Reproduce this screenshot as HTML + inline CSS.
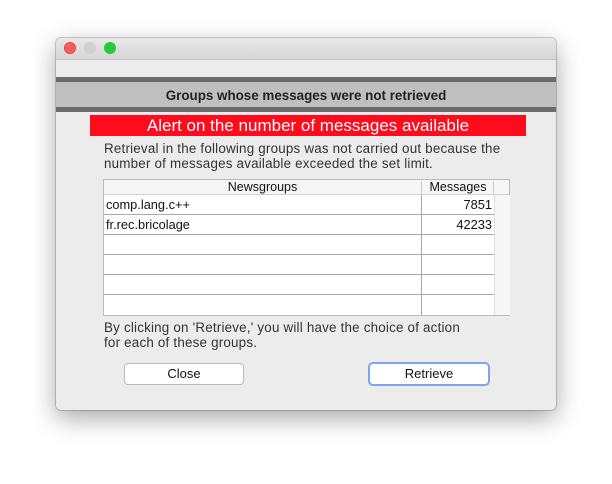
<!DOCTYPE html>
<html><head><style>
body{margin:0;width:612px;height:484px;background:#fff;font-family:"Liberation Sans",sans-serif;position:relative;overflow:hidden}
.win{position:absolute;left:56px;top:38px;width:500px;height:372px;background:#ececec;border-radius:5px;box-shadow:0 8px 25px rgba(0,0,0,.35),0 0 0 1px rgba(0,0,0,.18)}
.tb{position:absolute;left:0;top:0;width:500px;height:21px;background:linear-gradient(#e8e8e8,#d6d6d6);border-bottom:1px solid #c4c4c4;border-radius:5px 5px 0 0}
.d{position:absolute;top:4px;width:12px;height:12px;border-radius:50%;box-sizing:border-box}
.a{position:absolute}
.t{position:absolute;font-size:13.4px;color:#333;white-space:nowrap;letter-spacing:.2px}
.btn{position:absolute;height:20px;background:#fff;border:1px solid #b9b9b9;border-radius:4px;font-size:13px;text-align:center;line-height:20px;color:#111}
</style></head><body>
<div class="win">
<div class="tb">
<div class="d" style="left:8px;background:#fe5f57;border:1px solid #e0443e"></div>
<div class="d" style="left:28px;background:#d0d0d0"></div>
<div class="d" style="left:48px;background:#28c840"></div>
</div>
<div class="a" style="left:0;top:39px;width:500px;height:5px;background:#6b6b6b"></div>
<div class="a" style="left:0;top:44px;width:500px;height:25px;background:#bfbfbf;text-align:center;font-weight:bold;font-size:13.4px;line-height:27px;color:#222">Groups whose messages were not retrieved</div>
<div class="a" style="left:0;top:69px;width:500px;height:5px;background:#6b6b6b"></div>
<div class="a" style="left:34px;top:77px;width:436px;height:21px;background:#fe0b1d;color:#fff;text-align:center;font-size:17px;line-height:21px">Alert on the number of messages available</div>
<div class="t" style="left:48px;top:103px">Retrieval in the following groups was not carried out because the</div>
<div class="t" style="left:48px;top:118px">number of messages available exceeded the set limit.</div>
<div class="a" style="left:47px;top:141px;width:405px;height:135px;background:#fff;border:1px solid #bcbcbc">
 <div class="a" style="left:0;top:0;width:405px;height:14px;background:#f6f6f6;border-bottom:1px solid #d0d0d0;font-size:12.5px;color:#111">
  <div class="a" style="left:0;width:317px;text-align:center;top:0">Newsgroups</div>
  <div class="a" style="left:318px;width:72px;text-align:center;top:0">Messages</div>
  <div class="a" style="left:317px;top:1px;width:1px;height:13px;background:#ccc"></div>
  <div class="a" style="left:389px;top:1px;width:1px;height:13px;background:#ccc"></div>
 </div>
 <div class="a" style="left:390px;top:15px;width:15px;height:120px;background:#f7f7f7;border-left:1px solid #ddd"></div>
 <div class="a" style="left:317px;top:15px;width:1px;height:120px;background:#aaa"></div>
 <div class="a" style="left:0;top:34px;width:390px;height:1px;background:#aaa"></div>
 <div class="a" style="left:0;top:54px;width:390px;height:1px;background:#aaa"></div>
 <div class="a" style="left:0;top:74px;width:390px;height:1px;background:#aaa"></div>
 <div class="a" style="left:0;top:94px;width:390px;height:1px;background:#aaa"></div>
 <div class="a" style="left:0;top:114px;width:390px;height:1px;background:#aaa"></div>
 <div class="t" style="left:2px;top:17px;color:#111;font-size:12.8px;letter-spacing:0">comp.lang.c++</div>
 <div class="t" style="left:2px;top:37px;color:#111;font-size:12.8px;letter-spacing:0">fr.rec.bricolage</div>
 <div class="t" style="left:318px;width:70px;text-align:right;top:17px;color:#111;font-size:12.8px;letter-spacing:0">7851</div>
 <div class="t" style="left:318px;width:70px;text-align:right;top:37px;color:#111;font-size:12.8px;letter-spacing:0">42233</div>
</div>
<div class="t" style="left:48px;top:282px">By clicking on 'Retrieve,' you will have the choice of action</div>
<div class="t" style="left:48px;top:297px">for each of these groups.</div>
<div class="btn" style="left:68px;top:325px;width:118px">Close</div>
<div class="btn" style="left:312px;top:324px;width:118px;border:2px solid #7ba6ee;border-radius:5px">Retrieve</div>
</div>
</body></html>
